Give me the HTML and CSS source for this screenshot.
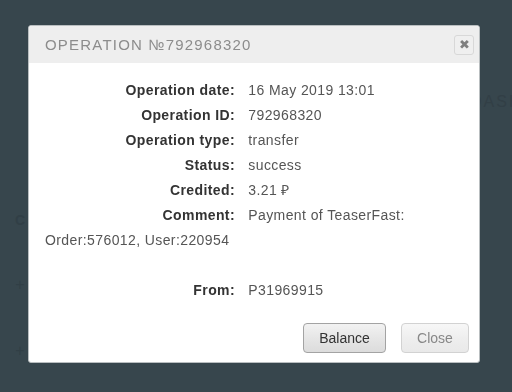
FILE: index.html
```html
<!DOCTYPE html>
<html lang="en">
<head>
    <meta charset="UTF-8">
    <meta name="viewport" content="width=device-width, initial-scale=1.0">
    <title>Operation</title>
    <link rel="stylesheet" href="styles.css">
</head>
<body>
    <div class="page">
        <div class="side">
            <span class="side-c">C</span>
            <span class="side-plus">+</span>
            <span class="side-plus">+</span>
        </div>
        <div class="main">
            <div class="main-title">DASH</div>
            <div class="main-dot"></div>
        </div>
    </div>

    <div class="overlay">
        <div class="modal">
            <div class="modal-header">
                <span class="modal-title">OPERATION №792968320</span>
                <button type="button" class="modal-x">&#10006;</button>
            </div>
            <div class="modal-body">
                <div><b>Operation date:</b> 16 May 2019 13:01</div>
                <div><b>Operation ID:</b> 792968320</div>
                <div><b>Operation type:</b> transfer</div>
                <div><b>Status:</b> success</div>
                <div><b>Credited:</b> 3.21 &#8381;</div>
                <div><b>Comment:</b> Payment of TeaserFast: Order:576012, User:220954</div>
                <div><br></div>
                <div><b>From:</b> P31969915</div>
            </div>
            <div class="modal-footer">
                <button type="button" class="btn btn-main">Balance</button>
                <button type="button" class="btn btn-close">Close</button>
            </div>
        </div>
    </div>
</body>
</html>
```

FILE: styles.css
```css
body {
    font-family: "Liberation Sans", Arial, sans-serif;
    background-color: #37464d;
    color: #444;
    margin: 0;
    padding: 0;
    height: 392px;
    overflow: hidden;
}
.page {
    display: grid;
    grid-template-columns: 40px 1fr;
    height: 392px;
}
.side {
    display: flex;
    flex-direction: column;
    align-items: center;
    padding-top: 212px;
    gap: 48px;
    color: #313f46;
    font-weight: bold;
    font-size: 14px;
}
.side-plus {
    font-weight: normal;
    font-size: 16px;
}
.main {
    overflow: hidden;
}
.main-title {
    padding: 93px 0 0 430px;
    white-space: nowrap;
    color: #323f46;
    font-size: 16px;
    letter-spacing: 2px;
}
.main-dot {
    width: 26px;
    height: 26px;
    border-radius: 50%;
    background-color: #2f3d45;
    margin: 226px 0 0 307px;
}
.overlay {
    position: fixed;
    top: 0;
    left: 0;
    right: 0;
    bottom: 0;
}
.modal {
    margin: 25px 0 0 28px;
    width: 450px;
    background-color: #fff;
    border: 1px solid #b9bec0;
    border-radius: 3px;
    overflow: hidden;
}
.modal-header {
    display: flex;
    align-items: center;
    justify-content: space-between;
    height: 37px;
    padding: 0 5px 0 16px;
    background-color: #eee;
}
.modal-title {
    color: #8c8c8c;
    font-size: 15px;
    letter-spacing: 1.2px;
}
.modal-x {
    width: 20px;
    height: 20px;
    padding: 0;
    border: 1px solid #d8d8d8;
    border-radius: 3px;
    background-color: #efefef;
    color: #7f7f7f;
    font-size: 13px;
    line-height: 18px;
    text-align: center;
}
.modal-body {
    padding: 15px 16px 10px 16px;
    font-size: 14px;
    line-height: 25px;
    letter-spacing: 0.4px;
    color: #555;
}
.modal-body b {
    display: inline-block;
    width: 190px;
    margin-right: 9px;
    text-align: right;
    color: #333;
}
.modal-footer {
    display: flex;
    justify-content: flex-end;
    gap: 15px;
    padding: 10px 10px 9px 0;
}
.btn {
    height: 30px;
    padding: 0 14px;
    border-radius: 4px;
    font-family: "Liberation Sans", Arial, sans-serif;
    font-size: 14px;
    cursor: pointer;
}
.btn-main {
    width: 83px;
    border: 1px solid #a3a3a3;
    background: linear-gradient(#f2f2f2, #e6e6e6 50%, #dcdcdc);
    color: #333;
}
.btn-close {
    width: 68px;
    border: 1px solid #d2d2d2;
    background: linear-gradient(#f7f7f7, #eeeeee 50%, #e9e9e9);
    color: #888;
}
```
